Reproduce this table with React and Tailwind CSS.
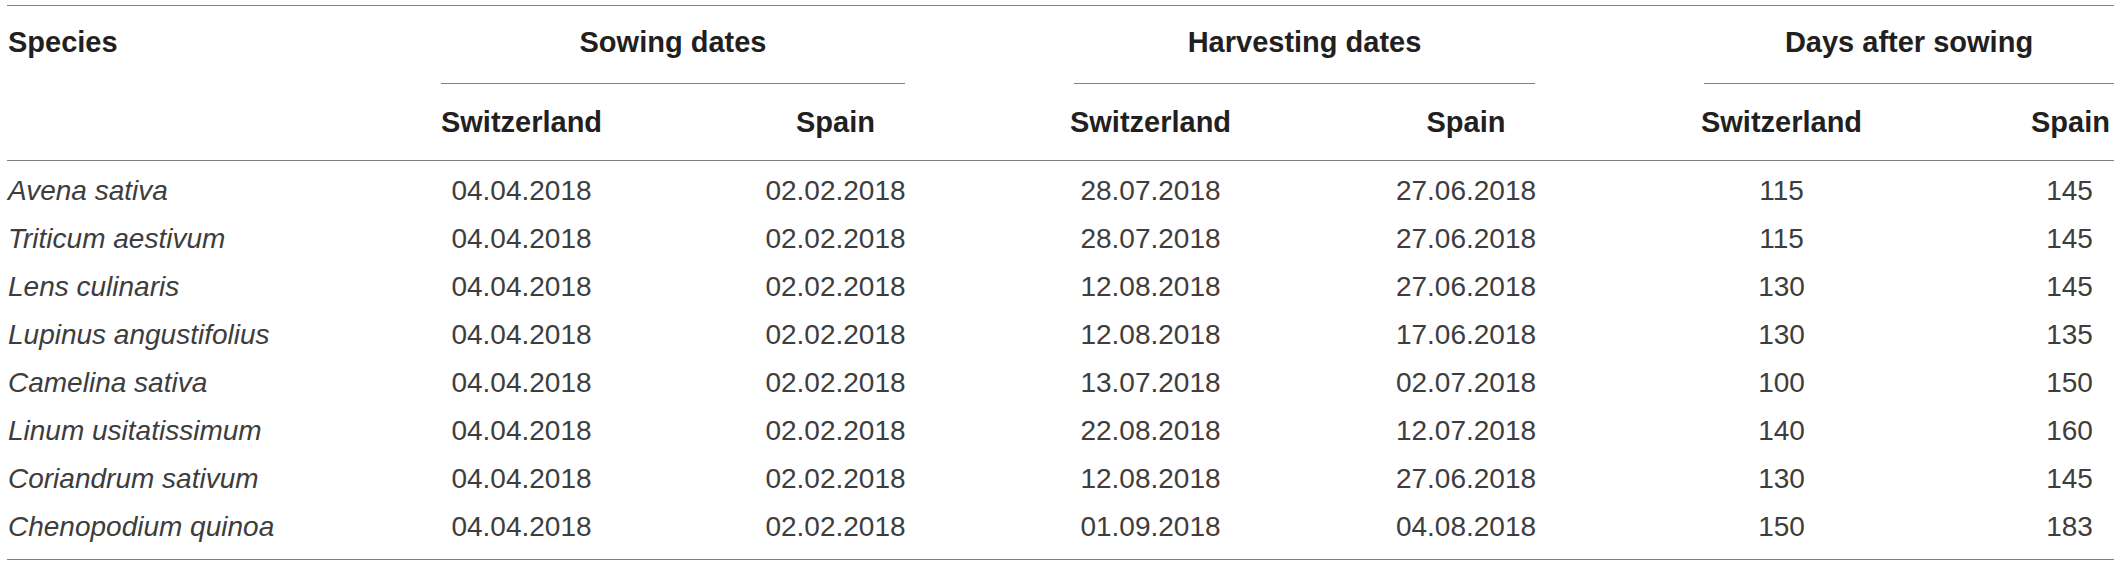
import React from 'react';

const rows = [
  ['Avena sativa', '04.04.2018', '02.02.2018', '28.07.2018', '27.06.2018', '115', '145'],
  ['Triticum aestivum', '04.04.2018', '02.02.2018', '28.07.2018', '27.06.2018', '115', '145'],
  ['Lens culinaris', '04.04.2018', '02.02.2018', '12.08.2018', '27.06.2018', '130', '145'],
  ['Lupinus angustifolius', '04.04.2018', '02.02.2018', '12.08.2018', '17.06.2018', '130', '135'],
  ['Camelina sativa', '04.04.2018', '02.02.2018', '13.07.2018', '02.07.2018', '100', '150'],
  ['Linum usitatissimum', '04.04.2018', '02.02.2018', '22.08.2018', '12.07.2018', '140', '160'],
  ['Coriandrum sativum', '04.04.2018', '02.02.2018', '12.08.2018', '27.06.2018', '130', '145'],
  ['Chenopodium quinoa', '04.04.2018', '02.02.2018', '01.09.2018', '04.08.2018', '150', '183'],
];

const grid = 'grid grid-cols-[354px_321px_307px_323px_308px_323px_171px]';

const App = () => {
  return (
    <div className="w-[2120px] h-[567px] bg-white font-['Liberation_Sans',Arial,sans-serif]">
      <div className="w-[2107px] ml-[7px] pt-[5px]">
        <div className="border-t border-b border-[#808080]">
          {/* Group header row */}
          <div className={`${grid} text-[29px] font-bold text-[#231f20] leading-[34px]`}>
            <div className="pl-[1px] pt-[19px]">Species</div>
            <div className="col-span-2 ml-[80px] mr-[84px] pt-[19px] pb-[24px] border-b border-[#808080] text-center">
              Sowing dates
            </div>
            <div className="col-span-2 ml-[85px] mr-[85px] pt-[19px] pb-[24px] border-b border-[#808080] text-center">
              Harvesting dates
            </div>
            <div className="col-span-2 ml-[84px] pt-[19px] pb-[24px] border-b border-[#808080] text-center">
              Days after sowing
            </div>
          </div>

          {/* Country header row */}
          <div className={`${grid} text-[29px] font-bold text-[#231f20] leading-[34px] py-[21px] border-b border-[#808080]`}>
            <div />
            <div className="text-center">Switzerland</div>
            <div className="text-center">Spain</div>
            <div className="text-center">Switzerland</div>
            <div className="text-center">Spain</div>
            <div className="text-center">Switzerland</div>
            <div className="pl-[88px] pr-[6px] text-center">Spain</div>
          </div>

          {/* Body */}
          <div className="pt-[6px] pb-[8px] text-[28px] text-[#3d3d3d]">
            {rows.map((r) => (
              <div key={r[0]} className={`${grid} h-[48px] items-center leading-[48px]`}>
                <div className="pl-[1px] italic">{r[0]}</div>
                <div className="text-center">{r[1]}</div>
                <div className="text-center">{r[2]}</div>
                <div className="text-center">{r[3]}</div>
                <div className="text-center">{r[4]}</div>
                <div className="text-center">{r[5]}</div>
                <div className="pl-[88px] pr-[6px] text-center">{r[6]}</div>
              </div>
            ))}
          </div>
        </div>
      </div>
    </div>
  );
};

export default App;
